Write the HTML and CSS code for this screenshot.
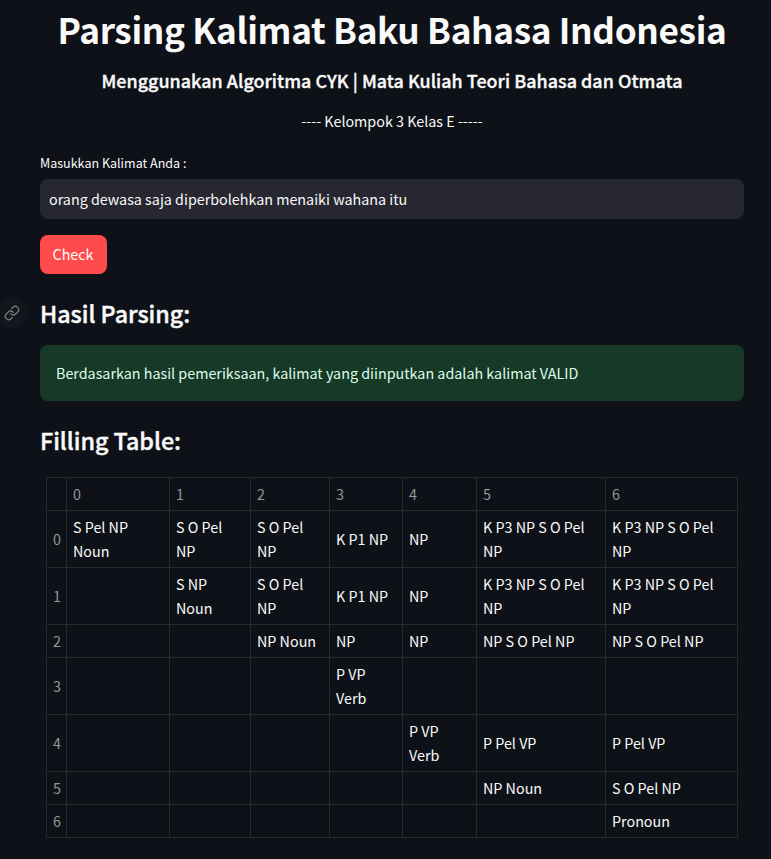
FILE: index.html
```
<!DOCTYPE html>
<html lang="id">
<head>
<meta charset="utf-8">
<title>Parsing Kalimat Baku Bahasa Indonesia</title>
<link rel="stylesheet" href="styles.css">
</head>
<body>
<main class="page">
  <h1 class="title">Parsing Kalimat Baku Bahasa Indonesia</h1>
  <h4 class="subtitle">Menggunakan Algoritma CYK | Mata Kuliah Teori Bahasa dan Otmata</h4>
  <p class="group">---- Kelompok 3 Kelas E -----</p>
  <label class="label" for="sentence">Masukkan Kalimat Anda :</label>
  <input class="input" id="sentence" type="text" value="orang dewasa saja diperbolehkan menaiki wahana itu">
  <button class="check" type="button">Check</button>
  <h3 class="heading heading-result">
    <a class="anchor" href="#hasil"><svg width="16" height="16" viewBox="0 0 24 24" fill="none" stroke="currentColor" stroke-width="2" stroke-linecap="round" stroke-linejoin="round"><path d="M10 13a5 5 0 0 0 7.54.54l3-3a5 5 0 0 0-7.07-7.07l-1.72 1.71"/><path d="M14 11a5 5 0 0 0-7.54-.54l-3 3a5 5 0 0 0 7.07 7.07l1.71-1.71"/></svg></a>Hasil Parsing:</h3>
  <div class="alert">Berdasarkan hasil pemeriksaan, kalimat yang diinputkan adalah kalimat VALID</div>
  <h3 class="heading heading-table">Filling Table:</h3>
  <table class="table">
    <colgroup><col class="c-index"><col class="c0"><col class="c1"><col class="c2"><col class="c3"><col class="c4"><col class="c5"><col class="c6"></colgroup>
    <thead>
      <tr><th></th><th>0</th><th>1</th><th>2</th><th>3</th><th>4</th><th>5</th><th>6</th></tr>
    </thead>
    <tbody>
      <tr class="tall"><th>0</th><td>S Pel NP<br>Noun</td><td>S O Pel<br>NP</td><td>S O Pel<br>NP</td><td>K P1 NP</td><td>NP</td><td>K P3 NP S O Pel<br>NP</td><td>K P3 NP S O Pel<br>NP</td></tr>
      <tr class="tall"><th>1</th><td></td><td>S NP<br>Noun</td><td>S O Pel<br>NP</td><td>K P1 NP</td><td>NP</td><td>K P3 NP S O Pel<br>NP</td><td>K P3 NP S O Pel<br>NP</td></tr>
      <tr><th>2</th><td></td><td></td><td>NP Noun</td><td>NP</td><td>NP</td><td>NP S O Pel NP</td><td>NP S O Pel NP</td></tr>
      <tr class="tall"><th>3</th><td></td><td></td><td></td><td>P VP<br>Verb</td><td></td><td></td><td></td></tr>
      <tr class="tall"><th>4</th><td></td><td></td><td></td><td></td><td>P VP<br>Verb</td><td>P Pel VP</td><td>P Pel VP</td></tr>
      <tr><th>5</th><td></td><td></td><td></td><td></td><td></td><td>NP Noun</td><td>S O Pel NP</td></tr>
      <tr><th>6</th><td></td><td></td><td></td><td></td><td></td><td></td><td>Pronoun</td></tr>
    </tbody>
  </table>
</main>
</body>
</html>
```
FILE: styles.css
```
* { box-sizing: border-box; }
html { background: #0e1117; }
body {
  margin: 0;
  height: 859px;
  overflow: hidden;
  background: #0e1117;
  color: #fafafa;
  font: 400 14.32px/24px "Noto Sans CJK SC", "Open Sans", sans-serif;
}
.page { width: 704px; margin-left: 40px; }
.title, .subtitle, .group { text-align: center; white-space: nowrap; }
.title { margin: 0; padding-top: 2px; height: 57px; font-size: 35.2px; line-height: 53px; font-weight: 700; letter-spacing: -0.35px; }
.subtitle { margin: 8px 0 0; height: 30px; font-size: 17.9px; line-height: 30px; font-weight: 500; letter-spacing: 0.04px; -webkit-text-stroke: 0.35px currentColor; }
.group { margin: 14px 0 0; }
.label { display: block; margin-top: 20px; height: 20px; font-size: 12.54px; line-height: 20px; }
.input {
  display: block;
  width: 704px;
  height: 40px;
  margin-top: 6px;
  padding: 0 8px 2px 9px;
  border: 0;
  border-radius: 8px;
  background: #262730;
  color: #fafafa;
  font: inherit;
}
.check {
  display: block;
  width: 67px;
  height: 39px;
  margin-top: 16px;
  padding: 0 1px 2px 0;
  border: 0;
  border-radius: 8px;
  background: #ff4b4b;
  color: #fff;
  font: inherit;
}
.heading { position: relative; margin: 0; height: 34px; font-size: 23.3px; line-height: 34px; font-weight: 500; letter-spacing: -0.02px; -webkit-text-stroke: 0.4px currentColor; }
.heading-result { margin-top: 22px; }
.heading-table { margin-top: 22px; }
.anchor {
  position: absolute;
  left: -44px;
  top: 1px;
  width: 32px;
  height: 32px;
  display: flex;
  align-items: center;
  justify-content: center;
  border-radius: 50%;
  background: #13161d;
  color: #77797d;
}
.alert {
  margin-top: 15px;
  height: 56px;
  padding: 16px;
  border-radius: 8px;
  background: #173928;
  color: #dffde9;
}
.table {
  width: 692px;
  margin: 20px 0 0 6px;
  table-layout: fixed;
  border-collapse: collapse;
}
.table tr { height: 33px; }
.table .tall { height: 57px; }
.table th, .table td {
  padding: 4px 0 4px 6px;
  border: 1px solid #26292e;
  text-align: left;
  vertical-align: middle;
  font-weight: 400;
  white-space: nowrap;
}
.table th { color: #95979a; }
.c-index { width: 20px; }
.c0 { width: 103px; }
.c1 { width: 81px; }
.c2 { width: 79px; }
.c3 { width: 73px; }
.c4 { width: 74px; }
.c5 { width: 129px; }
.c6 { width: 132px; }
```
